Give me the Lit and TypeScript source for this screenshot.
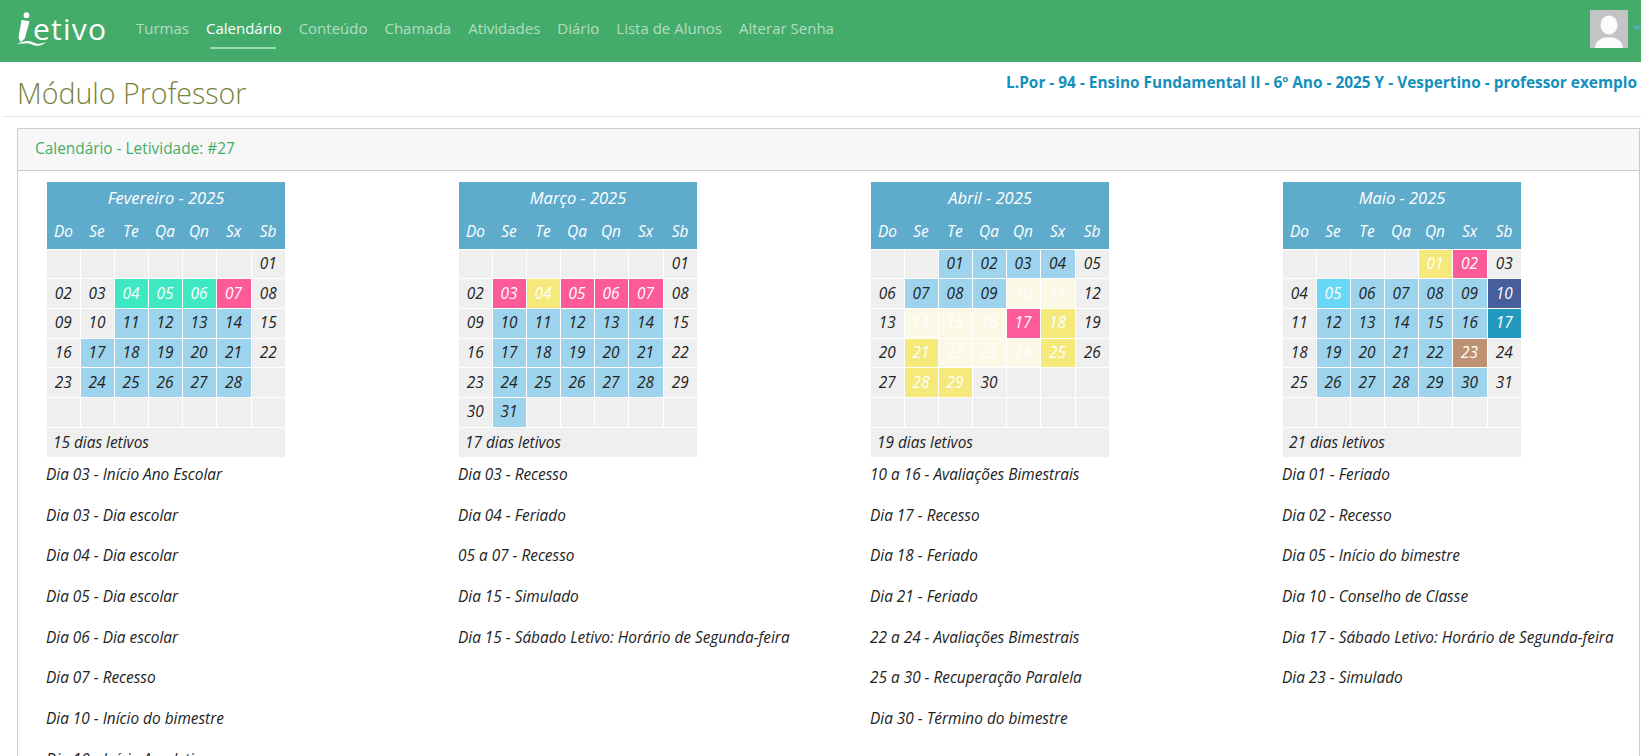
import { LitElement, html, css } from 'lit';
import { customElement } from 'lit/decorators.js';

const BLUE = '#9dd3ec';
const GREEN = '#3de8c3';
const PINK = '#fd5a9a';
const YELLOW = '#f4e97a';
const CREAM = '#fcf8e6';

interface Month {
  title: string;
  total: string;
  start: number;
  days: number;
  colors: Record<string, number[]>;
  events: string[];
}

const MONTHS: Month[] = [
  {
    title: 'Fevereiro - 2025',
    total: '15 dias letivos',
    start: 6,
    days: 28,
    colors: {
      [GREEN]: [4, 5, 6],
      [PINK]: [7],
      [BLUE]: [11, 12, 13, 14, 17, 18, 19, 20, 21, 24, 25, 26, 27, 28],
    },
    events: [
      'Dia 03 - Início Ano Escolar',
      'Dia 03 - Dia escolar',
      'Dia 04 - Dia escolar',
      'Dia 05 - Dia escolar',
      'Dia 06 - Dia escolar',
      'Dia 07 - Recesso',
      'Dia 10 - Início do bimestre',
      'Dia 10 - Início Ano letivo',
    ],
  },
  {
    title: 'Março - 2025',
    total: '17 dias letivos',
    start: 6,
    days: 31,
    colors: {
      [PINK]: [3, 5, 6, 7],
      [YELLOW]: [4],
      [BLUE]: [10, 11, 12, 13, 14, 17, 18, 19, 20, 21, 24, 25, 26, 27, 28, 31],
    },
    events: [
      'Dia 03 - Recesso',
      'Dia 04 - Feriado',
      '05 a 07 - Recesso',
      'Dia 15 - Simulado',
      'Dia 15 - Sábado Letivo: Horário de Segunda-feira',
    ],
  },
  {
    title: 'Abril - 2025',
    total: '19 dias letivos',
    start: 2,
    days: 30,
    colors: {
      [BLUE]: [1, 2, 3, 4, 7, 8, 9],
      [CREAM]: [10, 11, 14, 15, 16, 22, 23, 24],
      [PINK]: [17],
      [YELLOW]: [18, 21, 25, 28, 29],
    },
    events: [
      '10 a 16 - Avaliações Bimestrais',
      'Dia 17 - Recesso',
      'Dia 18 - Feriado',
      'Dia 21 - Feriado',
      '22 a 24 - Avaliações Bimestrais',
      '25 a 30 - Recuperação Paralela',
      'Dia 30 - Término do bimestre',
    ],
  },
  {
    title: 'Maio - 2025',
    total: '21 dias letivos',
    start: 4,
    days: 31,
    colors: {
      [YELLOW]: [1],
      [PINK]: [2],
      '#68d8f6': [5],
      '#465e9b': [10],
      '#2499bf': [17],
      '#bd9172': [23],
      [BLUE]: [6, 7, 8, 9, 12, 13, 14, 15, 16, 19, 20, 21, 22, 26, 27, 28, 29, 30],
    },
    events: [
      'Dia 01 - Feriado',
      'Dia 02 - Recesso',
      'Dia 05 - Início do bimestre',
      'Dia 10 - Conselho de Classe',
      'Dia 17 - Sábado Letivo: Horário de Segunda-feira',
      'Dia 23 - Simulado',
    ],
  },
];

const WEEK = ['Do', 'Se', 'Te', 'Qa', 'Qn', 'Sx', 'Sb'];
const NAV = ['Turmas', 'Calendário', 'Conteúdo', 'Chamada', 'Atividades', 'Diário', 'Lista de Alunos', 'Alterar Senha'];

@customElement('app-root')
export class AppRoot extends LitElement {
  static styles = css`
    :host {
      display: block;
      height: 100vh;
      overflow: hidden;
      background: #fff;
      font-family: 'Open Sans', 'Noto Sans', sans-serif;
      font-size: 15.4px;
      color: #222;
    }

    .navbar {
      height: 62px;
      background: #43ac6a;
      display: flex;
      align-items: flex-start;
      padding: 0 0 0 17px;
    }

    .logo {
      width: 119px;
      height: 62px;
      display: flex;
      align-items: flex-start;
      color: #fff;
      flex: none;
    }

    .logo svg {
      width: 30px;
      height: 36px;
      margin-top: 12px;
      flex: none;
    }

    .logo span {
      font-size: 30px;
      font-weight: 400;
      letter-spacing: 1.2px;
      line-height: 38px;
      margin: 10px 0 0 -14px;
    }

    .nav {
      display: flex;
      gap: 17px;
      margin: 0;
      padding: 0;
      list-style: none;
    }

    .nav li {
      height: 48px;
      line-height: 57px;
      font-size: 15px;
      color: rgba(255, 255, 255, 0.6);
      white-space: nowrap;
      position: relative;
    }

    .nav li.active {
      color: #fff;
    }

    .nav li.active::after {
      content: '';
      position: absolute;
      left: 4px;
      right: 6px;
      top: 47px;
      height: 2px;
      background: rgba(255, 255, 255, 0.5);
    }

    .user {
      margin-left: auto;
      display: flex;
      align-items: flex-start;
      padding-top: 10px;
    }

    .avatar {
      width: 38px;
      height: 38px;
      display: block;
    }

    .caret {
      width: 0;
      height: 0;
      margin: 16px 0 0 5px;
      border: 4px solid transparent;
      border-top-color: #5fabcc;
      border-bottom-width: 0;
    }

    .page-header {
      display: flex;
      justify-content: space-between;
      align-items: flex-start;
      height: 54px;
      margin-left: 4px;
      padding-left: 13px;
      padding-right: 4px;
      border-bottom: 1px solid #e6e6e6;
    }

    h1 {
      margin: 11px 0 0;
      font-size: 28.6px;
      line-height: 39px;
      font-weight: 300;
      color: #78833c;
    }

    .course {
      margin-top: 11px;
      font-size: 15.4px;
      line-height: 20px;
      font-weight: 700;
      color: #1490bd;
      white-space: nowrap;
    }

    .panel {
      margin: 11px 1px 0 17px;
      border: 1px solid #ccc;
      border-bottom: 0;
    }

    .panel-heading {
      height: 42px;
      line-height: 40px;
      box-sizing: border-box;
      padding-left: 17px;
      background: #f7f7f7;
      border-bottom: 1px solid #ccc;
      color: #43ac6a;
    }

    .months {
      display: grid;
      grid-template-columns: repeat(4, 412px);
      padding: 11px 0 0 29px;
    }

    table {
      width: 238px;
      table-layout: fixed;
      border-collapse: collapse;
      font-style: italic;
    }

    col {
      width: 34px;
    }

    col.first {
      width: 33px;
    }

    col.wide {
      width: 35px;
    }

    th {
      background: #5fabcc;
      color: #fff;
      font-weight: 400;
      text-align: center;
      box-sizing: border-box;
    }

    .title th {
      height: 33px;
      padding: 0 0 2px;
      font-size: 16.5px;
    }

    .week th {
      height: 34px;
      padding: 0 0 1px;
    }

    td {
      height: 29.7px;
      padding: 0;
      box-sizing: border-box;
      border: 1px solid #fff;
      background: #efefef;
      text-align: center;
      line-height: 20px;
      color: #222;
    }

    td.on {
      color: #fff;
    }

    td.blue {
      color: #222;
    }

    td:first-child {
      border-left: 0;
    }

    td:last-child {
      border-right: 0;
    }

    .total td {
      text-align: left;
      padding: 2px 0 0 6px;
      border-bottom: 0;
    }

    .events {
      padding-top: 8px;
      margin-left: -1px;
    }

    .events p {
      margin: 0 0 20.7px;
      line-height: 20px;
      font-style: italic;
      white-space: nowrap;
    }
  `;

  _dayColor(month: Month, day: number) {
    return Object.keys(month.colors).find((color) => month.colors[color].includes(day));
  }

  _renderCell(month: Month, day: number | null) {
    if (day === null) return html`<td></td>`;
    const label = String(day).padStart(2, '0');
    const color = this._dayColor(month, day);
    if (!color) return html`<td>${label}</td>`;
    const cls = color === BLUE ? 'blue' : 'on';
    return html`<td class=${cls} style="background:${color}">${label}</td>`;
  }

  _renderMonth(month: Month) {
    const cells: (number | null)[] = [];
    for (let i = 0; i < month.start; i++) cells.push(null);
    for (let d = 1; d <= month.days; d++) cells.push(d);
    while (cells.length < 42) cells.push(null);
    const rows = [0, 1, 2, 3, 4, 5].map((r) => cells.slice(r * 7, r * 7 + 7));

    return html`
      <div>
        <table>
          <colgroup>
            <col class="first" /><col /><col /><col /><col /><col class="wide" /><col />
          </colgroup>
          <tr class="title"><th colspan="7">${month.title}</th></tr>
          <tr class="week">${WEEK.map((w) => html`<th>${w}</th>`)}</tr>
          ${rows.map((row) => html`<tr>${row.map((d) => this._renderCell(month, d))}</tr>`)}
          <tr class="total"><td colspan="7">${month.total}</td></tr>
        </table>
        <div class="events">${month.events.map((e) => html`<p>${e}</p>`)}</div>
      </div>
    `;
  }

  render() {
    return html`
      <header class="navbar">
        <div class="logo">
          <svg viewBox="0 0 30 36" fill="none">
            <circle cx="9.500" cy="3.200" r="2.900" fill="#fff"/>
            <path d="M4.500 8l8 1.200-4.800 17.600-4.200 3.400-2-4.600z" fill="#fff"/>
            <path d="M0 32c4.500-2 9-3.400 13-2.800 3.500.6 5.500 3.200 9.500 2.600 2.500-.4 4.500-1 6.500-1.800-2.200 2.400-5.500 3.800-9 3.800-3.800 0-6-2.600-9.500-2.600-3.500 0-7 .2-10.500.800z" fill="#fff"/>
          </svg>
          <span>etivo</span>
        </div>
        <ul class="nav">
          ${NAV.map((n) => html`<li class=${n === 'Calendário' ? 'active' : ''}>${n}</li>`)}
        </ul>
        <div class="user">
          <svg class="avatar" viewBox="0 0 38 38">
            <rect width="38" height="38" fill="#c4c4c4"/>
            <ellipse cx="19" cy="15" rx="8.500" ry="9.500" fill="#fbfbfb"/>
            <path d="M5 38c.5-7 5-9 10-10.500h8C28 29 32.500 31 33 38z" fill="#fbfbfb"/>
          </svg>
          <span class="caret"></span>
        </div>
      </header>
      <div class="page-header">
        <h1>Módulo Professor</h1>
        <div class="course">L.Por - 94 - Ensino Fundamental II - 6º Ano - 2025 Y - Vespertino - professor exemplo</div>
      </div>
      <section class="panel">
        <div class="panel-heading">Calendário - Letividade: #27</div>
        <div class="months">${MONTHS.map((m) => this._renderMonth(m))}</div>
      </section>
    `;
  }
}
